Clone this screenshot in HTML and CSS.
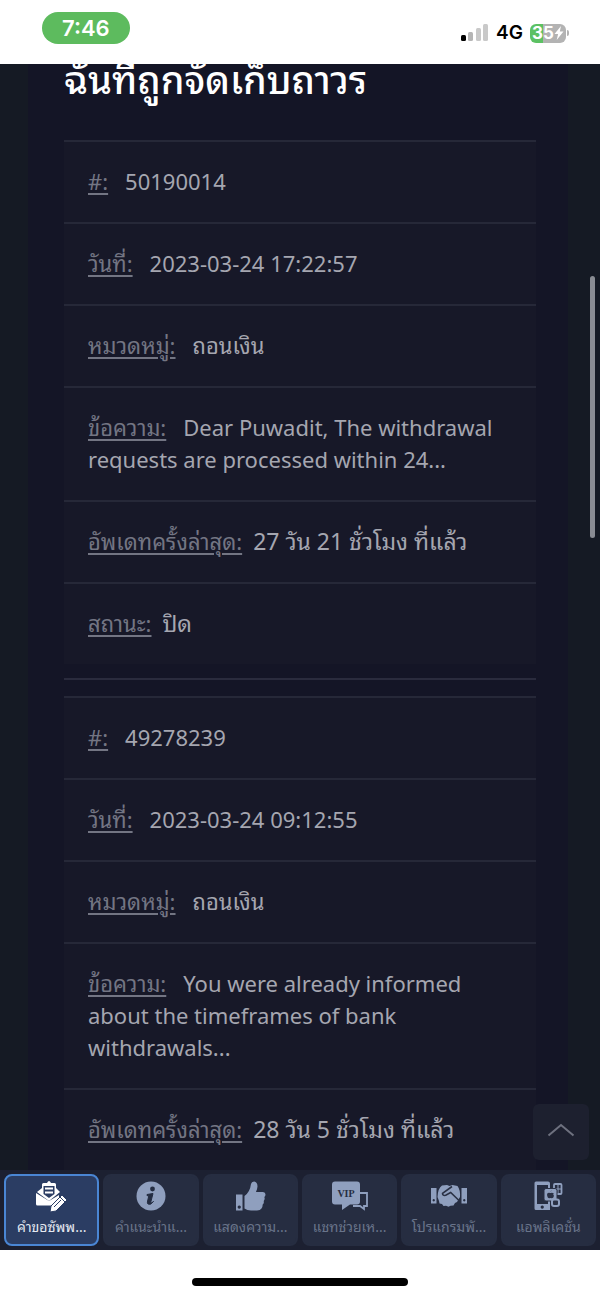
FILE: index.html
```html
<!DOCTYPE html>
<html lang="th">
<head>
<meta charset="utf-8">
<meta name="viewport" content="width=device-width, initial-scale=1">
<title>คำขอซัพพอร์ต</title>
<link rel="stylesheet" href="styles.css">
</head>
<body>
<div class="app">
  <header class="status">
    <span class="clock">7:46</span>
    <div class="signals">
      <svg width="28" height="18" viewBox="0 0 28 18" aria-hidden="true">
        <rect x="0" y="11" width="5" height="6" rx="1.5" fill="#000"/>
        <rect x="7" y="8" width="5" height="9" rx="1.5" fill="#b5b5b5"/>
        <rect x="15" y="4" width="5" height="13" rx="1.5" fill="#c9c9c9"/>
        <rect x="22" y="0" width="5" height="17" rx="1.5" fill="#c9c9c9"/>
      </svg>
      <span class="network">4G</span>
      <div class="battery-group">
        <div class="battery">
          <span class="level">35</span>
          <svg width="10" height="14" viewBox="0 0 9 14" aria-hidden="true"><path d="M6.500 0L0 8h3.600L2.200 14 9 5.600H5.300z" fill="#fff"/></svg>
        </div>
        <div class="battery-tip"></div>
      </div>
    </div>
  </header>

  <main class="page">
    <div class="panel">
      <h1 class="title">ฉันที่ถูกจัดเก็บถาวร</h1>
      <dl class="ticket">
        <div class="row"><dt>#:</dt><dd>50190014</dd></div>
        <div class="row"><dt>วันที่:</dt><dd>2023-03-24 17:22:57</dd></div>
        <div class="row"><dt>หมวดหมู่:</dt><dd>ถอนเงิน</dd></div>
        <div class="row"><dt>ข้อความ:</dt><dd>Dear Puwadit, The withdrawal requests are processed within 24...</dd></div>
        <div class="row tight"><dt>อัพเดทครั้งล่าสุด:</dt><dd>27 วัน 21 ชั่วโมง ที่แล้ว</dd></div>
        <div class="row tight"><dt>สถานะ:</dt><dd>ปิด</dd></div>
      </dl>
      <hr class="divider">
      <dl class="ticket">
        <div class="row"><dt>#:</dt><dd>49278239</dd></div>
        <div class="row"><dt>วันที่:</dt><dd>2023-03-24 09:12:55</dd></div>
        <div class="row"><dt>หมวดหมู่:</dt><dd>ถอนเงิน</dd></div>
        <div class="row"><dt>ข้อความ:</dt><dd>You were already informed about the timeframes of bank withdrawals...</dd></div>
        <div class="row tight"><dt>อัพเดทครั้งล่าสุด:</dt><dd>28 วัน 5 ชั่วโมง ที่แล้ว</dd></div>
        <div class="row tight"></div>
      </dl>
    </div>
    <div class="thumb"></div>
    <button class="to-top" type="button" aria-label="ขึ้นด้านบน">
      <svg width="28" height="14" viewBox="0 0 28 14" aria-hidden="true"><path d="M1.500 12.500L14 2l12.500 10.500" fill="none" stroke="#6e717f" stroke-width="2"/></svg>
    </button>
  </main>

  <nav class="tabs">
    <button class="tab active" type="button">
      <svg width="36" height="32" viewBox="0 0 36 32" aria-hidden="true">
        <path d="M3 12l5-4V4.500q0-1.500 1.500-1.500H13q2-4 4 0h3.500Q22 3 22 4.500V8l4 4-11 9z" fill="currentColor"/>
        <path d="M9.500 6h11v8L15 18l-5.500-4z" fill="#2b3d63"/>
        <path d="M11 8.500h8M11 12.500h8" stroke="currentColor" stroke-width="2"/>
        <path d="M2 13l13 8 10-6v9q0 1.500-1.500 1.500h-20Q2 25.500 2 24z" fill="currentColor"/>
        <path d="M17 26L28 15l5 5-11 11-6 1z" fill="currentColor" stroke="#2b3d63" stroke-width="1"/>
        <path d="M26 17l5 5M20 27l7-7" stroke="#2b3d63" stroke-width="1"/>
      </svg>
      <span class="tab-text">คำขอซัพพ...</span>
    </button>
    <button class="tab" type="button">
      <svg width="36" height="32" viewBox="0 0 36 32" aria-hidden="true">
        <circle cx="18" cy="16" r="14.500" fill="currentColor"/>
        <circle cx="19.500" cy="9" r="2.400" fill="#242d42"/>
        <path d="M14 14.500l6-1-2.200 8.500q-.2 2 2.700-.5-3 4-5.500 2.500-1-.8-.4-3l1.200-5.200-1.800-.2z" fill="#242d42" stroke="#242d42"/>
      </svg>
      <span class="tab-text">คำแนะนำแ...</span>
    </button>
    <button class="tab" type="button">
      <svg width="36" height="32" viewBox="0 0 36 32" aria-hidden="true">
        <path fill-rule="evenodd" d="M4 14.500h6.500v16H4zM7.200 25.500a1.600 1.600 0 1 0 .1 0z" fill="currentColor"/>
        <path d="M12.500 16Q18 12 19 4q.5-2.500 3-2.500 3.500.5 3.500 5-.2 2.500-1.500 5.500h7q2.500.3 2.500 2.500 0 1.800-1.200 2.500 1 2-.6 4 .6 2.200-1 3.600 0 2.400-1.200 3.900-1.200 2-4.500 2h-6q-4 0-6.500-2z" fill="currentColor"/>
      </svg>
      <span class="tab-text">แสดงความ...</span>
    </button>
    <button class="tab" type="button">
      <svg width="38" height="32" viewBox="0 0 38 32" aria-hidden="true">
        <path d="M29 13h7v13h-3v3l-4-3h-7" fill="none" stroke="currentColor" stroke-width="1.800"/>
        <path d="M4 1.500h22q3 0 3 3v17q0 3-3 3h-7L11 30v-5.500H4q-3 0-3-3v-17q0-3 3-3z" fill="currentColor"/>
        <text class="vip" x="15" y="17" text-anchor="middle">VIP</text>
      </svg>
      <span class="tab-text">แชทช่วยเห...</span>
    </button>
    <button class="tab" type="button">
      <svg width="38" height="32" viewBox="0 0 38 32" aria-hidden="true">
        <path fill-rule="evenodd" d="M1 8h5.500v15.500H1zm2.700 11a1.200 1.200 0 1 0 .1 0zM31.500 8H37v15.500h-5.500zm2.700 11a1.200 1.200 0 1 0 .1 0z" fill="currentColor"/>
        <path d="M12 5.500l5-.5 2.500 1 3-1 5 1q3 4 2.500 11l-3 5-2 1-1.500 2.500-3 .3-2 1-2.500-1-2.500.2-1.500-2-2.500-.5-.5-2.500L7.500 17Q8 8 12 5.500z" fill="currentColor"/>
        <path d="M22 6.500l-9.500 6.800q0 2.700 3.200 2l5-2.800L29.500 21" fill="none" stroke="#2a3145" stroke-width="1.600"/>
      </svg>
      <span class="tab-text">โปรแกรมพั...</span>
    </button>
    <button class="tab" type="button">
      <svg width="36" height="32" viewBox="0 0 36 32" aria-hidden="true">
        <path fill-rule="evenodd" d="M6 1.500h12q2 0 2 2V30H6q-1.500 0-1.500-1.500V3Q4.500 1.500 6 1.500zM7 5v19h11V5zM12.200 25.500a1.600 1.600 0 1 0 .1 0z" fill="currentColor"/>
        <rect x="24" y="4" width="7.500" height="10" rx="1" fill="none" stroke="currentColor" stroke-width="1.800"/>
        <path d="M24 9h7M28 4v10" stroke="currentColor"/>
        <rect x="14" y="8.500" width="13" height="12.500" rx="2" fill="currentColor" stroke="#2a3145"/>
        <path d="M20.500 13q-3.500-1.200-3.500 1.800.5 3.500 2.200 3.500 1.300-.6 2.600 0 1.700 0 2.200-2.600-1.300-.8-.3-2.500-1.400-.8-3.200-.2zm0-.9q0-1.600 1.400-1.900" fill="#2a3145"/>
        <rect x="22" y="19.500" width="7" height="6.500" rx="2" fill="#2a3145" stroke="currentColor" stroke-width="2"/>
      </svg>
      <span class="tab-text">แอพลิเคชั่น</span>
    </button>
  </nav>
  <footer class="home"><div class="home-bar"></div></footer>
</div>
</body>
</html>
```
FILE: styles.css
```css
* { box-sizing: border-box; }

body {
  margin: 0;
  background: #fff;
  font-family: "Noto Sans", "Noto Sans Thai Looped", Loma, "Noto Sans Thai", sans-serif;
}

.app {
  display: flex;
  flex-direction: column;
  height: 100vh;
}

.status {
  display: flex;
  justify-content: space-between;
  align-items: flex-start;
  padding: 12px 31px 20px 42px;
}

.clock {
  padding: 0 20px;
  border-radius: 16px;
  background: #5dbb5e;
  color: #fff;
  font: 600 22px/32px Inter, sans-serif;
}

.signals {
  display: flex;
  align-items: center;
  gap: 7px;
  padding-top: 11px;
}

.network {
  color: #000;
  font: 600 19px/20px Inter, sans-serif;
}

.battery-group {
  display: flex;
  align-items: center;
  gap: 1px;
}

.battery {
  display: flex;
  align-items: center;
  justify-content: center;
  width: 36px;
  height: 19px;
  border-radius: 6px;
  background: linear-gradient(90deg, #5cc163 35%, #b3b3b3 35%);
}

.battery-tip {
  width: 2px;
  height: 6px;
  border-radius: 0 2px 2px 0;
  background: #b3b3b3;
}

.level {
  color: #fff;
  font: 700 17px/19px Inter, sans-serif;
}

.page {
  position: relative;
  flex: 1;
  min-height: 0;
  overflow: hidden;
  padding: 0 32px 0 28px;
  background: #151a24;
}

.panel {
  padding: 0 32px 0 36px;
  background: #141526;
}

.title {
  margin: -15px 0 31px;
  color: #fff;
  font-size: 38px;
  font-weight: 500;
  line-height: 60px;
  white-space: nowrap;
}

.ticket {
  margin: 0;
}

.row {
  padding: 23px 24px 25px;
  border-top: 2px solid #262838;
  background: #171828;
  color: #a5a6b0;
  font-size: 22px;
  line-height: 32px;
}

.row dt {
  display: inline;
  margin-right: 17px;
  color: #737583;
  font-size: 22px;
  text-decoration: underline;
  text-decoration-thickness: 2px;
  text-underline-offset: 3px;
}

.row dd {
  display: inline;
  margin: 0;
}

.tight { font-size: 23px; }

.tight dt { margin-right: 11px; }

.divider {
  height: 2px;
  margin: 14px 0 16px;
  border: 0;
  background: #2a2b3d;
}

.thumb {
  position: absolute;
  top: 212px;
  right: 5px;
  width: 5px;
  height: 262px;
  border-radius: 3px;
  background: #898c93;
}

.to-top {
  position: absolute;
  right: 11px;
  bottom: 10px;
  display: flex;
  align-items: center;
  justify-content: center;
  width: 56px;
  height: 56px;
  padding: 0 0 4px;
  border: 0;
  border-radius: 6px;
  background: #1d202f;
}

.tabs {
  display: grid;
  grid-template-columns: repeat(6, minmax(0, 1fr));
  gap: 4px;
  padding: 4px;
  background: #1c2031;
}

.tab {
  display: flex;
  flex-direction: column;
  align-items: center;
  gap: 4px;
  padding: 4px 0 6px;
  border: 2px solid #262d41;
  border-radius: 8px;
  background: #262d41;
  color: #8f9fbe;
  font-family: inherit;
}

.tab-text {
  color: #69748a;
  font-size: 14px;
  line-height: 22px;
  white-space: nowrap;
}

.active {
  border-color: #4a86d4;
  background: #2b3d63;
  color: #fff;
}

.active .tab-text { color: #e4e8f0; }

.vip {
  fill: #262d41;
  font: 700 10px "Liberation Serif", serif;
}

.home {
  display: flex;
  justify-content: center;
  padding: 28px 0 13px;
}

.home-bar {
  width: 36%;
  height: 8px;
  border-radius: 4px;
  background: #000;
}
```
